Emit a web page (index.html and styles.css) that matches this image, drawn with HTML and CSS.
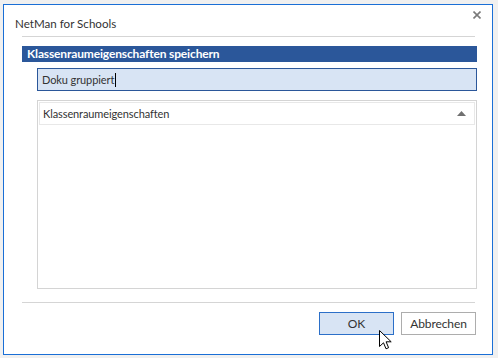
FILE: index.html
```html
<!DOCTYPE html>
<html lang="de">
<head>
    <meta charset="UTF-8">
    <title>NetMan for Schools</title>
    <link rel="stylesheet" href="styles.css">
</head>
<body>
    <div class="dialog">
        <div class="titlebar">
            <span class="title">NetMan for Schools</span>
            <svg class="close" width="8" height="8" viewBox="0 0 8 8">
                <path d="M0.5 0.5L7.5 7.5M7.5 0.5L0.5 7.5" stroke="#7a7a7a" stroke-width="1.6"/>
            </svg>
        </div>
        <div class="rule"></div>

        <div class="section-head">Klassenraumeigenschaften speichern</div>

        <div class="name-input">Doku gruppiert<span class="caret"></span></div>

        <div class="list">
            <div class="list-head">
                <span>Klassenraumeigenschaften</span>
                <!-- Pfeil nach oben -->
                <svg width="9" height="5" viewBox="0 0 9 5">
                    <path d="M4.5 0L9 5H0Z" fill="#707070"/>
                </svg>
            </div>
        </div>

        <div class="rule rule-bottom"></div>

        <div class="buttons">
            <button class="btn btn-default">OK</button>
            <button class="btn">Abbrechen</button>
        </div>

        <!-- Mauszeiger -->
        <svg class="cursor" width="13" height="20" viewBox="0 0 13 20">
            <path d="M0.5 0.5V16.5L4.5 12.8L7 18.8L9.6 17.7L7.1 11.8H12.2Z" fill="white" stroke="black" stroke-width="1" stroke-linejoin="miter"/>
        </svg>
    </div>
</body>
</html>
```

FILE: styles.css
```css
body {
    margin: 0;
    padding: 4px 5px 3px 3px;
    background-color: #f0f0f0;
    font-family: Lato, "Noto Sans", sans-serif;
    font-size: 11px;
    letter-spacing: -0.1px;
    color: #333;
}
.dialog {
    position: relative;
    width: 490px;
    height: 351px;
    box-sizing: border-box;
    border: 1px solid #1a6fd6;
    background-color: white;
    display: flex;
    flex-direction: column;
}
.titlebar {
    height: 31px;
    box-sizing: border-box;
    padding: 10px 11px 0 11px;
    display: flex;
    justify-content: space-between;
    align-items: flex-start;
}
.title {
    line-height: 17px;
    font-size: 11.6px;
    letter-spacing: 0;
    color: #333;
}
.close {
    margin-top: -4px;
}
.rule {
    height: 1px;
    background-color: #d5d5d5;
    margin: 0 17px 0 18px;
}
.section-head {
    margin: 9px 15px 0 18px;
    height: 16px;
    line-height: 16px;
    padding-left: 5px;
    background-color: #2b579a;
    color: white;
    font-size: 12px;
    font-weight: bold;
    letter-spacing: -0.15px;
}
.name-input {
    margin: 6px 15px 0 33px;
    height: 23px;
    box-sizing: border-box;
    border: 1px solid #2b579a;
    background-color: #d8e4f4;
    padding-left: 4px;
    color: #333;
    display: flex;
    align-items: center;
}
.caret {
    display: inline-block;
    width: 1px;
    height: 14px;
    margin-left: 1px;
    background-color: black;
}
.list {
    margin: 9px 15px 0 33px;
    height: 189px;
    box-sizing: border-box;
    border: 1px solid #d4d4d4;
    padding: 1px;
}
.list-head {
    height: 23px;
    box-sizing: border-box;
    border: 1px solid #e8e8e8;
    padding: 0 8px 0 3px;
    display: flex;
    justify-content: space-between;
    align-items: center;
}
.rule-bottom {
    margin-top: 13px;
}
.buttons {
    margin: 9px 16px 0 0;
    display: flex;
    justify-content: flex-end;
    gap: 7px;
}
.btn {
    width: 75px;
    height: 23px;
    box-sizing: border-box;
    border: 1px solid #adadad;
    background-color: white;
    font-family: inherit;
    font-size: 12px;
    letter-spacing: -0.1px;
    color: #333;
    padding: 0;
}
.btn-default {
    border-color: #2b6fc8;
    background-color: #d8e4f4;
}
.cursor {
    position: absolute;
    left: 375px;
    top: 325px;
}
```
